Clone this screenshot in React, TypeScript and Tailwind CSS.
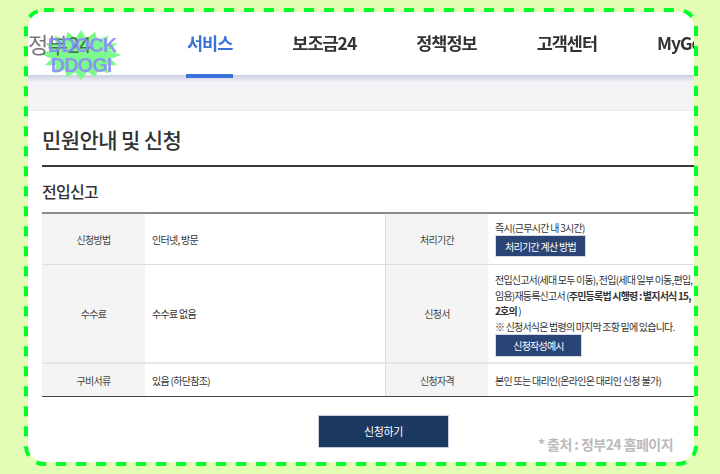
const kr = "font-['Noto_Sans_CJK_KR','Noto_Sans',sans-serif]";

function LogoStamp() {
  return (
    <div className="absolute left-[13px] top-[18px] h-[50px] w-[80px]">
      <svg viewBox="0 0 84 54" preserveAspectRatio="none" className="absolute inset-0 h-full w-full mix-blend-multiply">
        <polygon
          fill="#7dfa8e"
          points="42,0 48,9 57,2 59,11 71,6 68,15 80,14 73,22 84,27 73,31 80,38 69,38 71,47 60,43 57,51 49,45 42,54 36,46 27,51 25,43 14,47 16,38 4,38 11,31 0,26 10,22 5,14 16,15 14,6 25,11 28,2 36,9"
        />
      </svg>
      <div className="absolute inset-0 flex flex-col items-center justify-center font-['Liberation_Sans',sans-serif] text-[20px] leading-[20px] font-bold tracking-[-1px] text-[#8c8cfb] opacity-90">
        <span className="pl-[2px]">DDOCK</span>
        <span>DDOGI</span>
      </div>
    </div>
  );
}

function NavBar() {
  return (
    <div className="relative z-10 flex h-[63px] shrink-0 items-center bg-white pb-[1px]">
      <div className="w-[159px] shrink-0 text-[22px] tracking-[-0.5px] whitespace-nowrap text-[#777]">정부24</div>
      <div className="flex gap-[60px] text-[17.5px] font-bold tracking-[-1px] whitespace-nowrap text-[#333]">
        <div className="relative text-[#3b72d9]">
          서비스
          <div className="absolute top-[44px] -right-px -left-px h-[4px] bg-[#3b72d9]" />
        </div>
        <div>보조금24</div>
        <div>정책정보</div>
        <div>고객센터</div>
        <div>MyGov</div>
      </div>
      <LogoStamp />
    </div>
  );
}

function Label({ children }: { children: React.ReactNode }) {
  return (
    <div className="flex w-[103px] shrink-0 items-center justify-center bg-[#f4f4f4] text-[#444]">{children}</div>
  );
}

function EdgeLabel({ children }: { children: React.ReactNode }) {
  return (
    <div className="flex w-[103px] shrink-0 items-center justify-center border-l border-[#ddd] bg-[#f4f4f4] text-[#444]">
      {children}
    </div>
  );
}

function Btn({ children, w }: { children: React.ReactNode; w: string }) {
  return (
    <div className={`flex items-center justify-center border border-[#d5dae6] bg-[#2b4476] text-white ${w}`}>
      {children}
    </div>
  );
}

function InfoTable() {
  return (
    <div className="w-[660px] border-t-2 border-b border-t-[#8a8a8a] border-b-[#444] text-[10px] tracking-[-0.7px] text-[#333]">
      <div className="flex h-[51px] border-b border-[#ddd]">
        <Label>신청방법</Label>
        <div className="flex w-[240px] shrink-0 items-center pl-[7px]">인터넷, 방문</div>
        <EdgeLabel>처리기간</EdgeLabel>
        <div className="flex flex-col pt-[6px] pl-[7px]">
          <div className="leading-[15px] whitespace-nowrap">즉시(근무시간 내 3시간)</div>
          <Btn w="h-[22px] w-[91px]">처리기간 계산 방법</Btn>
        </div>
      </div>
      <div className="flex h-[99px] border-b-2 border-[#e6e6e6]">
        <Label>수수료</Label>
        <div className="flex w-[240px] shrink-0 items-center pl-[7px]">수수료 없음</div>
        <EdgeLabel>신청서</EdgeLabel>
        <div className="flex flex-col pt-[7px] pl-[7px] leading-[15.5px] tracking-[-0.8px] whitespace-nowrap">
          <div>전입신고서(세대 모두 이동), 전입(세대 일부 이동,편입,</div>
          <div>
            임용)재등록신고서 (<b>주민등록법 시행령 : 별지서식 15,</b>
          </div>
          <div>
            <b>2호의</b> )
          </div>
          <div>※ 신청서식은 법령의 마지막 조항 밑에 있습니다.</div>
          <Btn w="h-[23px] w-[87px]">신청작성예시</Btn>
        </div>
      </div>
      <div className="flex h-[32px]">
        <Label>구비서류</Label>
        <div className="flex w-[240px] shrink-0 items-center pl-[7px]">있음 (하단참조)</div>
        <EdgeLabel>신청자격</EdgeLabel>
        <div className="flex items-center pl-[7px] whitespace-nowrap">본인 또는 대리인(온라인은 대리인 신청 불가)</div>
      </div>
    </div>
  );
}

export default function App() {
  return (
    <div className={`relative h-[474px] w-[720px] overflow-hidden bg-[#e3fdb5] pt-[12px] pl-[28px] ${kr}`}>
      <div className="flex h-[450px] w-[666px] flex-col overflow-hidden rounded-[16px] bg-white">
        <NavBar />
        <div className="h-[36px] shrink-0 border-b border-[#ececee] bg-gradient-to-b from-[#c9cfdd] from-0% via-[#f3f2f5] via-20% to-[#f4f3f5]" />
        <div className="relative flex-1 pl-[14px]">
          <h1 className="mt-[13px] text-[21px] leading-[30px] font-medium tracking-[-0.6px] text-[#333]">민원안내 및 신청</h1>
          <div className="mt-[11px] h-[2px] w-[660px] bg-[#3a3a3a]" />
          <h2 className="mt-[13px] text-[16px] leading-[22px] font-medium tracking-[-0.7px] text-[#333]">전입신고</h2>
          <div className="mt-[10px]">
            <InfoTable />
          </div>
          <div className="mt-[18px] ml-[276px] flex h-[33px] w-[131px] items-center justify-center border border-[#c8cfdc] bg-[#1c3960] text-[11px] tracking-[-0.4px] text-white">
            신청하기
          </div>
          <div className="absolute right-[21px] bottom-[7px] text-[14px] font-bold tracking-[-0.55px] text-[#bbb]">* 출처 : 정부24 홈페이지</div>
        </div>
      </div>
      {/* dashed frame drawn over the card */}
      <svg className="absolute inset-0 h-full w-full" viewBox="0 0 720 474" fill="none">
        <rect x="26" y="10" width="670" height="454" rx="18" stroke="#00ff2a" strokeWidth="4" strokeDasharray="10 10" />
      </svg>
    </div>
  );
}
